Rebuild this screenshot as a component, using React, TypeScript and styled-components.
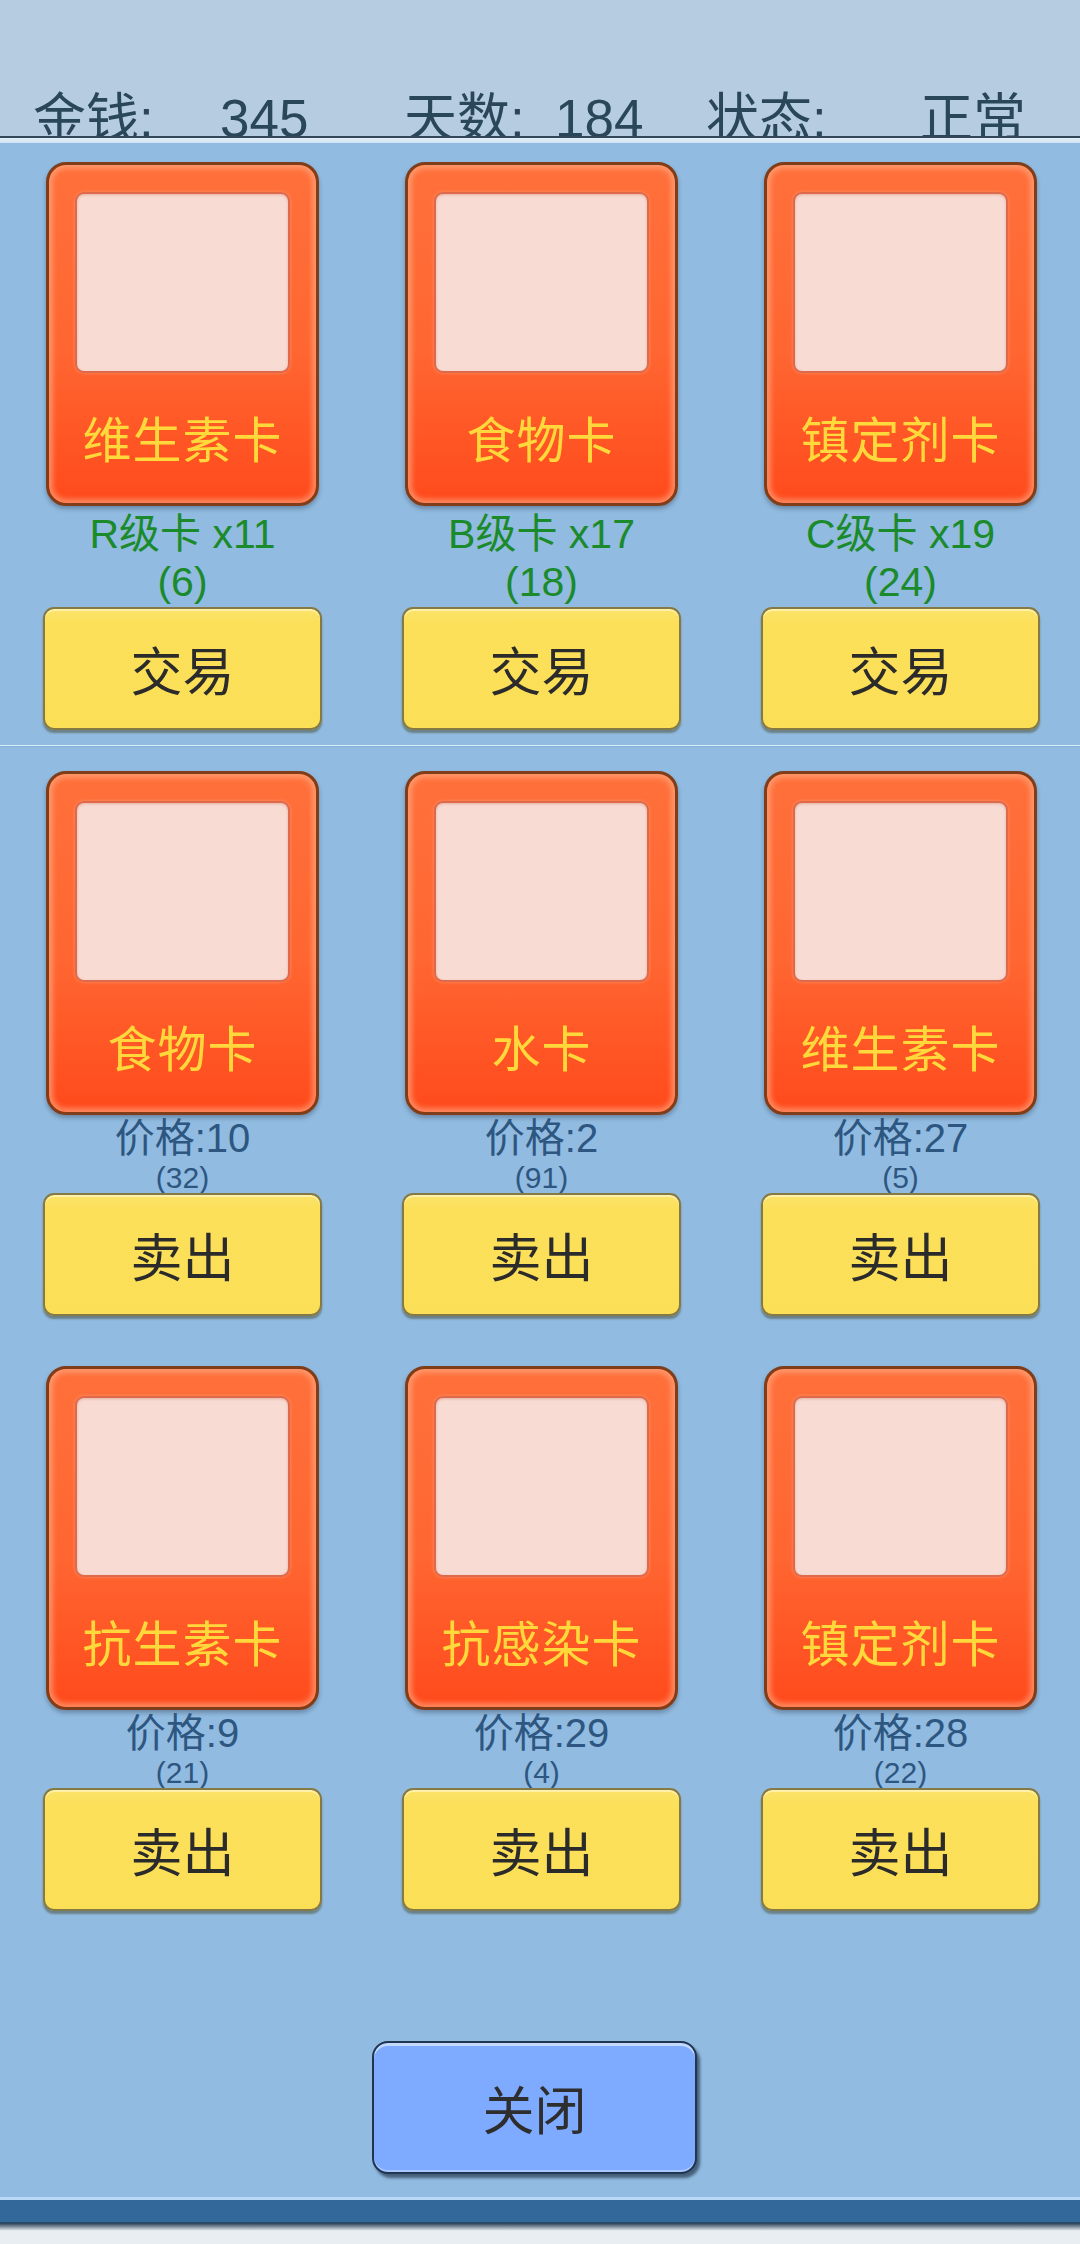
import React from 'react';
import styled, { createGlobalStyle } from 'styled-components';

type MarketItem = {
  name: string;
  grade: string;
  count: number;
  stock: number;
};

type OwnedItem = {
  name: string;
  price: number;
  stock: number;
};

const GlobalStyle = createGlobalStyle`
  html, body {
    margin: 0;
    padding: 0;
    background: #e9eef2;
  }
  * {
    box-sizing: border-box;
  }
`;

const cjk = `"Liberation Sans", "Noto Sans CJK SC", sans-serif`;

const Page = styled.div`
  width: 1080px;
  height: 2244px;
  display: flex;
  flex-direction: column;
  background: #91bbe0;
  font-family: ${cjk};
  overflow: hidden;
`;

const StatusBar = styled.div`
  height: 136px;
  flex-shrink: 0;
  background: #b6cde1;
  overflow: hidden;
  display: grid;
  grid-template-columns: 187px 184px 151px 151px 214px auto;
  align-content: end;
  padding-left: 33px;
`;

const StatusText = styled.span`
  font-size: 53px;
  line-height: 53px;
  color: #2a4759;
  margin-bottom: -9px;
  white-space: nowrap;
`;

const StatusRule = styled.div`
  flex-shrink: 0;
  height: 7px;
  border-top: 2px solid #33475a;
  background: linear-gradient(#e4eff8, #cfe2f2);
`;

const Main = styled.div`
  flex: 1;
  display: flex;
  flex-direction: column;
`;

const CardGrid = styled.div<{ topPad: number }>`
  display: grid;
  grid-template-columns: repeat(3, 1fr);
  row-gap: 50px;
  padding: ${({ topPad }) => topPad}px 0 0 3px;
`;

const Cell = styled.div`
  display: flex;
  flex-direction: column;
  align-items: center;
`;

const CardFrame = styled.div`
  width: 273px;
  height: 344px;
  border: 3px solid #7f3d1a;
  border-radius: 20px;
  background: linear-gradient(#ff703b 0%, #ff6631 55%, #ff4a1c 100%);
  box-shadow: inset 0 0 5px 4px rgba(255, 175, 135, 0.6),
    0 3px 4px rgba(40, 50, 70, 0.35);
  padding: 27px 26px 0;
  display: flex;
  flex-direction: column;
`;

const ArtPanel = styled.div`
  height: 181px;
  border: 2px solid #dd6a4c;
  border-radius: 9px;
  background: #f8dcd4;
  box-shadow: inset 0 1px 3px rgba(200, 90, 60, 0.35),
    0 0 3px 1px rgba(255, 150, 110, 0.5);
`;

const CardName = styled.div`
  flex: 1;
  display: flex;
  align-items: center;
  justify-content: center;
  padding-bottom: 4px;
  font-family: "Noto Sans CJK SC", sans-serif;
  font-size: 49px;
  color: #ffd93c;
  letter-spacing: 1px;
`;

const MarketInfo = styled.div`
  height: 101px;
  padding-top: 4px;
  text-align: center;
  font-size: 41px;
  line-height: 48px;
  color: #1b8a2b;
`;

const PriceInfo = styled.div`
  height: 78px;
  display: flex;
  flex-direction: column;
  align-items: center;
  color: #2d5680;
`;

const Price = styled.div`
  margin-top: 3px;
  font-size: 40px;
  line-height: 40px;
`;

const Stock = styled.div`
  margin-top: 5px;
  font-size: 30px;
  line-height: 30px;
`;

const ActionButton = styled.button`
  width: 279px;
  height: 123px;
  border: 2px solid #857a45;
  border-radius: 11px;
  background: linear-gradient(#fbe36a 0%, #fce05a 12%, #fbdf57 100%);
  box-shadow: inset 0 2px 0 #fff2a8, 0 3px 2px rgba(60, 60, 30, 0.45);
  font-family: "Noto Sans CJK SC", sans-serif;
  font-size: 52px;
  color: #2b2b2b;
  padding: 0;
  cursor: pointer;
`;

const Divider = styled.div`
  margin-top: 15px;
  height: 2px;
  border-top: 1px solid #d9eefb;
  border-bottom: 1px solid #86b0d6;
`;

const CloseRow = styled.div`
  flex: 1;
  display: flex;
  justify-content: center;
  align-items: flex-end;
  padding: 0 11px 23px 0;
`;

const CloseButton = styled.button`
  width: 325px;
  height: 133px;
  border: 2px solid #1f3550;
  border-radius: 16px;
  background: #7eaaff;
  box-shadow: inset 0 3px 0 #c2d8ff, inset 0 -2px 0 #a8c6ff,
    3px 4px 3px rgba(20, 35, 55, 0.6);
  font-family: "Noto Sans CJK SC", sans-serif;
  font-size: 52px;
  color: #2e2e2e;
  padding: 0;
  cursor: pointer;
`;

const BottomBar = styled.div`
  flex-shrink: 0;
  height: 47px;
  border-top: 3px solid #b9d9f6;
  background: linear-gradient(
    #33699a 0%,
    #33699a 49%,
    #223c56 52%,
    #8e9aa6 62%,
    #e9eef2 70%,
    #e9eef2 100%
  );
`;

const marketItems: MarketItem[] = [
  { name: '维生素卡', grade: 'R', count: 11, stock: 6 },
  { name: '食物卡', grade: 'B', count: 17, stock: 18 },
  { name: '镇定剂卡', grade: 'C', count: 19, stock: 24 }
];

const ownedItems: OwnedItem[] = [
  { name: '食物卡', price: 10, stock: 32 },
  { name: '水卡', price: 2, stock: 91 },
  { name: '维生素卡', price: 27, stock: 5 },
  { name: '抗生素卡', price: 9, stock: 21 },
  { name: '抗感染卡', price: 29, stock: 4 },
  { name: '镇定剂卡', price: 28, stock: 22 }
];

const Card = ({ name }: { name: string }) => (
  <CardFrame>
    <ArtPanel />
    <CardName>{name}</CardName>
  </CardFrame>
);

const App: React.FC = () => (
  <Page>
    <GlobalStyle />
    <StatusBar>
      <StatusText>金钱:</StatusText>
      <StatusText>345</StatusText>
      <StatusText>天数:</StatusText>
      <StatusText>184</StatusText>
      <StatusText>状态:</StatusText>
      <StatusText>正常</StatusText>
    </StatusBar>
    <StatusRule />
    <Main>
      <CardGrid topPad={19}>
        {marketItems.map((item) => (
          <Cell key={`market-${item.name}`}>
            <Card name={item.name} />
            <MarketInfo>
              {item.grade}级卡 x{item.count}
              <br />({item.stock})
            </MarketInfo>
            <ActionButton>交易</ActionButton>
          </Cell>
        ))}
      </CardGrid>
      <Divider />
      <CardGrid topPad={24}>
        {ownedItems.map((item, i) => (
          <Cell key={`owned-${i}`}>
            <Card name={item.name} />
            <PriceInfo>
              <Price>价格:{item.price}</Price>
              <Stock>({item.stock})</Stock>
            </PriceInfo>
            <ActionButton>卖出</ActionButton>
          </Cell>
        ))}
      </CardGrid>
      <CloseRow>
        <CloseButton>关闭</CloseButton>
      </CloseRow>
    </Main>
    <BottomBar />
  </Page>
);

export default App;
